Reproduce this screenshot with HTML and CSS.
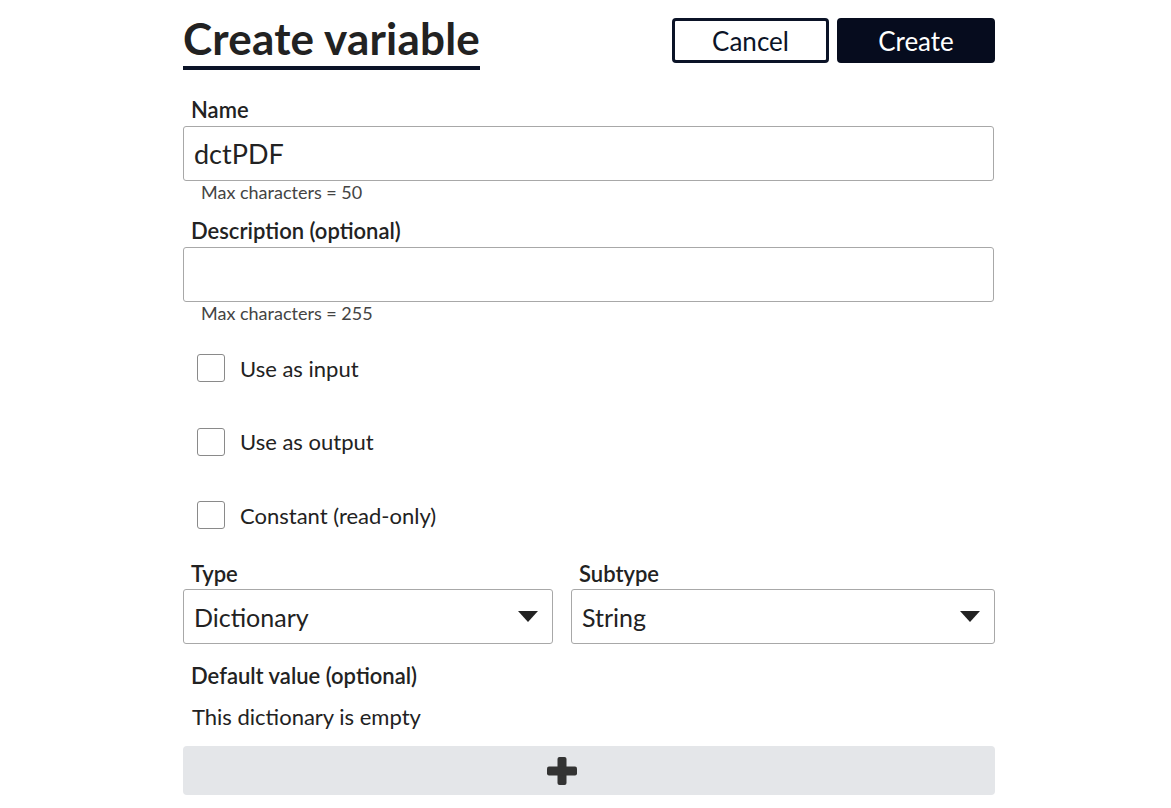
FILE: index.html
```html
<!DOCTYPE html>
<html>
<head>
<meta charset="utf-8">
<link rel="stylesheet" href="styles.css">
</head>
<body>
<div class="page">
  <header class="header">
    <h1 class="title">Create variable</h1>
    <div class="actions">
      <button class="btn btn-outline">Cancel</button>
      <button class="btn btn-solid">Create</button>
    </div>
  </header>

  <div class="field field-name">
    <label class="label">Name</label>
    <div class="input">dctPDF</div>
    <div class="hint">Max characters = 50</div>
  </div>

  <div class="field field-desc">
    <label class="label">Description (optional)</label>
    <div class="input"></div>
    <div class="hint">Max characters = 255</div>
  </div>

  <div class="checks">
    <div class="check"><span class="box"></span><span>Use as input</span></div>
    <div class="check"><span class="box"></span><span>Use as output</span></div>
    <div class="check"><span class="box"></span><span>Constant (read-only)</span></div>
  </div>

  <div class="selects">
    <div class="sel-field sel-type">
      <label class="label label-sel">Type</label>
      <div class="select"><span>Dictionary</span><span class="caret"></span></div>
    </div>
    <div class="sel-field sel-sub">
      <label class="label label-sel">Subtype</label>
      <div class="select"><span>String</span><span class="caret"></span></div>
    </div>
  </div>

  <div class="default">
    <label class="label">Default value (optional)</label>
    <p class="empty">This dictionary is empty</p>
    <div class="addbar">
      <svg width="30" height="28" viewBox="0 0 30 28"><rect x="10.5" y="0" width="9" height="28" rx="2" fill="#333"/><rect x="0" y="9.5" width="30" height="9" rx="2" fill="#333"/></svg>
    </div>
  </div>
</div>
</body>
</html>
```

FILE: styles.css
```css
* { box-sizing: border-box; }
html, body { margin: 0; padding: 0; background: #fff; }
body {
  font-family: "Lato", "Open Sans", sans-serif;
  color: #222;
}
.page {
  margin-left: 183px;
  width: 812px;
  padding-top: 14px;
}
.header {
  display: flex;
  justify-content: space-between;
  align-items: flex-start;
}
.title {
  margin: 0;
  font-size: 44px;
  font-weight: 700;
  color: #222;
  line-height: 48px;
  padding-bottom: 4px;
  border-bottom: 4px solid #0b1327;
  letter-spacing: 0.2px;
}
.actions {
  display: flex;
  gap: 8px;
  padding-top: 4px;
}
.btn {
  height: 45px;
  width: 157px;
  font-family: inherit;
  font-size: 26px;
  border-radius: 4px;
  line-height: 1;
  padding: 0;
}
.btn-outline { background: #fff; color: #0b1327; border: 3px solid #0b1327; }
.btn-solid { background: #060c1e; color: #fff; width: 158px; border: 2px solid #060c1e; }

.field { width: 811px; }
.field-name { margin-top: 28px; }
.field-desc { margin-top: 16px; }
.label {
  display: block;
  font-size: 22px;
  font-weight: 600;
  color: #222;
  padding-left: 8px;
  line-height: 24px;
  margin-bottom: 4px;
}
.label-sel { margin-bottom: 3px; }
.input {
  height: 55px;
  border: 1px solid #a8a8a8;
  border-radius: 3px;
  font-size: 27px;
  padding: 0 10px;
  line-height: 53px;
  color: #222;
}
.hint {
  font-size: 18px;
  color: #444;
  padding-left: 18px;
  line-height: 22px;
}

.checks {
  display: flex;
  flex-direction: column;
  gap: 45.5px;
  margin-top: 30px;
  padding-left: 14px;
}
.check {
  display: flex;
  align-items: center;
  gap: 15px;
  font-size: 22px;
  color: #222;
  height: 28px;
}
.box {
  width: 28px;
  height: 28px;
  border: 1px solid #8a8a8a;
  border-radius: 3px;
  flex: none;
}

.selects {
  display: flex;
  gap: 18px;
  margin-top: 33px;
}
.sel-type { width: 370px; }
.sel-sub { width: 424px; }
.select {
  height: 55px;
  border: 1px solid #a8a8a8;
  border-radius: 3px;
  display: flex;
  align-items: center;
  justify-content: space-between;
  padding: 0 14px 0 10px;
  font-size: 25px;
  color: #222;
}
.caret {
  width: 0; height: 0;
  border-left: 10px solid transparent;
  border-right: 10px solid transparent;
  border-top: 11px solid #222;
}

.default { margin-top: 20px; width: 812px; }
.empty {
  margin: 17px 0 0 9px;
  font-size: 22px;
  line-height: 24px;
  color: #222;
}
.addbar {
  margin-top: 17px;
  height: 49px;
  background: #e4e6e9;
  border-radius: 4px;
  display: flex;
  align-items: center;
  justify-content: center;
  padding-right: 54px;
}
```
